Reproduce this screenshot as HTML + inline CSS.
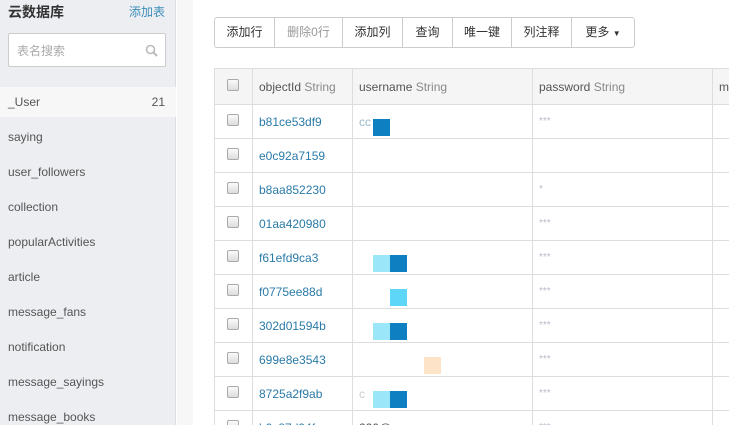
<!DOCTYPE html>
<html style="overflow:hidden"><head><meta charset="utf-8"><style>
*{margin:0;padding:0;box-sizing:border-box}
html,body{width:729px;height:425px;overflow:hidden}
body{background:#fff;font-family:"Liberation Sans","Noto Sans CJK SC",sans-serif;font-size:12px;color:#555;position:relative}
.side{position:absolute;left:0;top:0;width:176px;height:425px;background:#eceef1;border-right:1px solid #ddd}
.strip{position:absolute;left:177px;top:0;width:16px;height:425px;background:#f7f7f7}
.title{position:absolute;left:8px;top:2px;font-size:14px;font-weight:bold;color:#333}
.add{position:absolute;left:129px;top:3px;color:#3c8dbc;font-size:12px}
.search{position:absolute;left:8px;top:33px;width:158px;height:34px;background:#fff;border:1px solid #ccc;border-radius:2px;color:#aaa;padding:8px 0 0 8px}
.item{position:absolute;left:0;width:176px;height:30px;line-height:30px;padding-left:8px;color:#555}
.sel{background:#f7f7f7}
.sel span{position:absolute;right:11px}
.tb{position:absolute;left:214px;top:17px;height:31px;border:1px solid #ccc;border-radius:3px;display:flex}
.tb div{height:29px;line-height:29px;text-align:center;border-right:1px solid #ccc;color:#333}
.tb div:last-child{border:none}
.wrap{position:absolute;left:214px;top:68px;width:515px;height:357px;overflow:hidden}
table{border-collapse:collapse;table-layout:fixed;width:538px}
td{border:1px solid #ddd;height:34px;padding:0 0 0 6px;white-space:nowrap;overflow:hidden}
tr.h td{height:36px;background:#f5f5f5;color:#555}
tr.h td i{font-style:normal;color:#888}
td.id{color:#2a7aa8}
.cb{display:inline-block;width:12px;height:12px;border:1px solid #aaa;border-radius:2px;background:linear-gradient(#fafafa,#ddd);margin-left:12px}
.st{color:#bbc;font-size:10px}
.b{position:absolute;width:17px;height:17px}
</style></head><body>
<div class="side">
<div class="title">云数据库</div><div class="add">添加表</div>
<div class="search">表名搜索<svg style="position:absolute;right:7px;top:10px" width="13" height="13"><circle cx="5.5" cy="5.5" r="4" fill="none" stroke="#bbb" stroke-width="1.6"/><path d="M8.5 8.5 L12 12" stroke="#bbb" stroke-width="2"/></svg></div>
<div class="item sel" style="top:87px">_User<span>21</span></div>
<div class="item" style="top:122px">saying</div>
<div class="item" style="top:157px">user_followers</div>
<div class="item" style="top:192px">collection</div>
<div class="item" style="top:227px">popularActivities</div>
<div class="item" style="top:262px">article</div>
<div class="item" style="top:297px">message_fans</div>
<div class="item" style="top:332px">notification</div>
<div class="item" style="top:367px">message_sayings</div>
<div class="item" style="top:402px">message_books</div>
</div>
<div class="strip"></div>
<div class="tb">
<div style="width:60px">添加行</div><div style="width:68px;color:#999">删除0行</div><div style="width:60px">添加列</div><div style="width:50px">查询</div><div style="width:59px">唯一键</div><div style="width:60px">列注释</div><div style="width:62px">更多 <span style="font-size:8px">▼</span></div>
</div>
<div class="wrap"><table>
<colgroup><col style="width:38px"><col style="width:100px"><col style="width:180px"><col style="width:180px"><col style="width:40px"></colgroup>
<tr class="h"><td style="padding:0"><span class="cb"></span></td><td>objectId <i>String</i></td><td>username <i>String</i></td><td>password <i>String</i></td><td>m</td></tr>
<tr><td style="padding:0"><span class="cb"></span></td><td class="id">b81ce53df9</td><td style="color:#9bc">cc</td><td class="st">***</td><td></td></tr>
<tr><td style="padding:0"><span class="cb"></span></td><td class="id">e0c92a7159</td><td></td><td></td><td></td></tr>
<tr><td style="padding:0"><span class="cb"></span></td><td class="id">b8aa852230</td><td></td><td class="st">*</td><td></td></tr>
<tr><td style="padding:0"><span class="cb"></span></td><td class="id">01aa420980</td><td></td><td class="st">***</td><td></td></tr>
<tr><td style="padding:0"><span class="cb"></span></td><td class="id">f61efd9ca3</td><td></td><td class="st">***</td><td></td></tr>
<tr><td style="padding:0"><span class="cb"></span></td><td class="id">f0775ee88d</td><td></td><td class="st">***</td><td></td></tr>
<tr><td style="padding:0"><span class="cb"></span></td><td class="id">302d01594b</td><td></td><td class="st">***</td><td></td></tr>
<tr><td style="padding:0"><span class="cb"></span></td><td class="id">699e8e3543</td><td></td><td class="st">***</td><td></td></tr>
<tr><td style="padding:0"><span class="cb"></span></td><td class="id">8725a2f9ab</td><td style="color:#ccc">c</td><td class="st">***</td><td></td></tr>
<tr><td style="padding:0"><span class="cb"></span></td><td class="id">b0c87d94f</td><td>220@</td><td class="st">***</td><td></td></tr>
</table></div>
<div class="b" style="left:373px;top:119px;background:#0e7fc0"></div>
<div class="b" style="left:373px;top:255px;background:#9be6f8"></div><div class="b" style="left:390px;top:255px;background:#0e7fc0"></div>
<div class="b" style="left:390px;top:289px;background:#5ed6f7"></div>
<div class="b" style="left:373px;top:323px;background:#9be6f8"></div><div class="b" style="left:390px;top:323px;background:#0e7fc0"></div>
<div class="b" style="left:424px;top:357px;background:#fde3c8"></div>
<div class="b" style="left:373px;top:391px;background:#9be6f8"></div><div class="b" style="left:390px;top:391px;background:#0e7fc0"></div>
</body></html>
